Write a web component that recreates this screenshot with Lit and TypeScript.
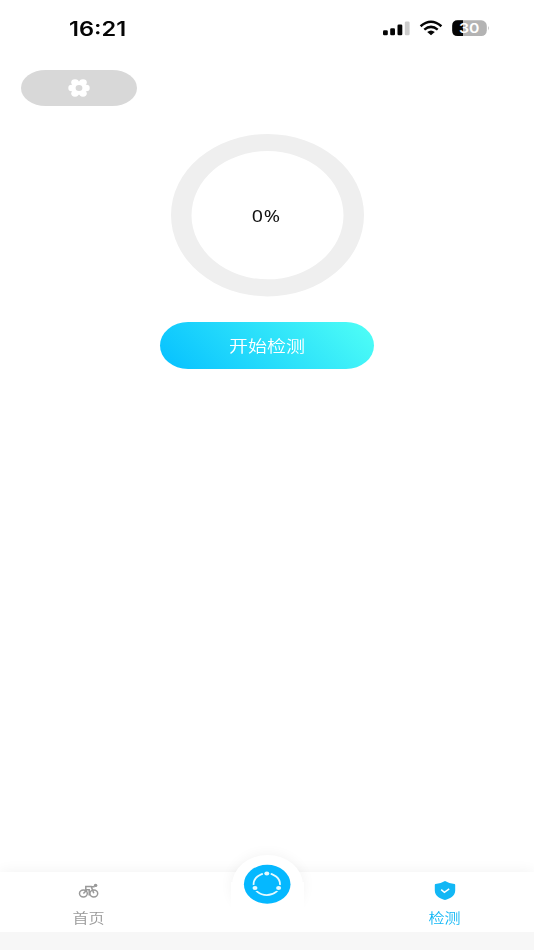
import { LitElement, html, css } from "lit";
import { customElement } from "lit/decorators.js";

@customElement("app-root")
export class AppRoot extends LitElement {
  static styles = css`
    :host {
      display: flex;
      flex-direction: column;
      width: 534px;
      height: 950px;
      overflow: hidden;
      background: #fff;
      font-family: "Noto Sans", "Noto Sans CJK SC", sans-serif;
    }
    svg { display: block; }
    .wide { display: inline-block; white-space: nowrap; transform: scaleX(1.19); will-change: transform; }
    .status {
      height: 56px;
      box-sizing: border-box;
      padding: 0 44px 0 69px;
      display: flex;
      align-items: center;
      justify-content: space-between;
    }
    .time {
      font: 600 19.5px/24px Inter, sans-serif;
      transform-origin: left;
      color: #050505;
      margin-top: 2px;
      transform: scaleX(1.21);
      will-change: transform;
    }
    .battery { font: 600 13.5px Inter, sans-serif; }
    main { flex: 1; display: flex; flex-direction: column; align-items: center; }
    .settings {
      align-self: flex-start;
      margin: 14px 0 0 21px;
      width: 116px;
      height: 36.4px;
      border-radius: 25px / 18.2px;
      background: #d8d8d8;
      display: flex;
      align-items: center;
      justify-content: center;
    }
    .ring {
      margin-top: 27.6px;
      width: 193px;
      height: 162.4px;
      display: grid;
      place-items: center;
      font: 16.5px/20px "Noto Sans", sans-serif;
      color: #111;
    }
    .ring > * { grid-area: 1 / 1; }
    .ring .wide { letter-spacing: 0.7px; margin: 1px 0 0 -1px; }
    .start {
      margin-top: 26px;
      width: 213.5px;
      height: 47px;
      border: 0;
      padding: 0 0 2px;
      border-radius: 28px / 23.5px;
      background: linear-gradient(45deg, #05c0ff, #50fff6);
      color: #fff;
      font: 350 16px/24px "Noto Sans CJK SC", sans-serif;
    }
    .tabs {
      height: 59.5px;
      display: grid;
      grid-template-columns: repeat(3, 1fr);
      background: #fff;
      box-shadow: 0 0 14px rgba(0, 0, 0, 0.06);
      position: relative;
    }
    .tab {
      display: flex;
      flex-direction: column;
      align-items: center;
      padding-top: 8px;
      color: #999;
      font: 350 13.5px/20px "Noto Sans CJK SC", sans-serif;
    }
    .tab .wide { margin: 7px 1px 0 0; }
    .active { color: #12b7f5; }
    .center { display: flex; justify-content: center; }
    .bump {
      margin-top: -17px;
      width: 71px;
      height: 60px;
      border-radius: 50%;
      background: #fff;
      box-shadow: 0 0 14px rgba(0, 0, 0, 0.06);
    }
    .cover {
      position: absolute;
      left: 231px;
      top: 10px;
      width: 73px;
      height: 49px;
      background: #fff;
    }
    .foot { height: 18.5px; background: #f7f7f7; position: relative; }
  `;

  render() {
    return html`
      <header class="status">
        <span class="time">16:21</span>
        <svg width="108" height="20" viewBox="382 18 108 20">
          <rect x="383" y="30.3" width="4.8" height="5" rx="1.3" fill="#050505" />
          <rect x="390.2" y="28.2" width="4.8" height="7.1" rx="1.3" fill="#050505" />
          <rect x="397.5" y="24.5" width="4.8" height="10.8" rx="1.3" fill="#050505" />
          <rect x="404.8" y="21.5" width="4.8" height="13.8" rx="1.3" fill="#ccc" />
          <g fill="none" stroke="#050505" stroke-width="2.5">
            <path d="M420.6 26.2Q431 17.4 441.4 26.2" />
            <path d="M424.3 29.6Q431 24.2 437.7 29.6" />
          </g>
          <path d="M427.2 32Q431 29 434.8 32L431 35.3Z" fill="#050505" />
          <rect x="452.2" y="20.3" width="34.6" height="15.8" rx="5.5" fill="#b3b3b3" />
          <path d="M463 20.3H457.7Q452.2 20.3 452.2 25.8V30.6Q452.2 36.1 457.7 36.1H463Z" fill="#050505" />
          <path d="M488 25.8Q489.8 28.2 488 30.6Z" fill="#b3b3b3" />
          <text class="battery" x="459" y="33.2" textLength="20.5" lengthAdjust="spacingAndGlyphs" fill="#fff">30</text>
        </svg>
      </header>
      <main>
        <div class="settings">
          <svg width="22" height="18" viewBox="-11 -9 22 18">
            <g fill="#fff">
              <ellipse rx="8" ry="6.8" />
              <circle cx="-7.5" r="3.2" /><circle cx="7.5" r="3.2" />
              <ellipse cx="-4" cy="-5.6" rx="3.8" ry="3.1" /><ellipse cx="4" cy="-5.6" rx="3.8" ry="3.1" />
              <ellipse cx="-4" cy="5.6" rx="3.8" ry="3.1" /><ellipse cx="4" cy="5.6" rx="3.8" ry="3.1" />
            </g>
            <ellipse rx="3.4" ry="2.9" fill="#d8d8d8" />
          </svg>
        </div>
        <div class="ring">
          <svg width="193" height="162.4" viewBox="0 0 193 162.4" overflow="visible">
            <path fill="#efefef" fill-rule="evenodd" d="M0 81.2A96.5 81.2 0 0 1 193 81.2A96.5 81.2 0 0 1 0 81.2ZM20.5 81.2A76 64.2 0 0 0 172.5 81.2A76 64.2 0 0 0 20.5 81.2Z" />
          </svg>
          <span class="wide">0%</span>
        </div>
        <button class="start"><span class="wide">开始检测</span></button>
      </main>
      <nav class="tabs">
        <div class="tab">
          <svg width="22" height="20" viewBox="78 880 22 20">
            <g fill="none" stroke="#999" stroke-width="1.5">
              <ellipse cx="83.4" cy="893.5" rx="3.9" ry="3.4" />
              <ellipse cx="93.8" cy="893.5" rx="3.9" ry="3.4" />
              <path d="M83.4 893.5L86.5 890.4M85.8 890V886.4H91.2L93.8 893.3M86.2 889.8H89.2V895.4M91.2 886.4L94.6 886.8" />
            </g>
            <ellipse cx="95.6" cy="885.4" rx="1.8" ry="1.6" fill="#999" />
          </svg>
          <span class="wide">首页</span>
        </div>
        <div class="center"><div class="bump"></div></div>
        <div class="tab active">
          <svg width="22" height="20" viewBox="0 0 22 20">
            <path d="M11 1Q15 3.3 20.5 4Q21.2 4.2 21.2 5V10.5C21.2 16 15.5 19 11 20C6.5 19 .8 16 .8 10.5V5Q.8 4.2 1.5 4Q7 3.3 11 1Z" fill="#12b7f5" />
            <path d="M7.2 9.6L10.4 12.3L15.2 8.8" fill="none" stroke="#fff" stroke-width="1.5" />
          </svg>
          <span class="wide">检测</span>
        </div>
        <div class="cover">
          <svg width="73" height="49" viewBox="231 882 73 49" overflow="visible">
            <ellipse cx="267.2" cy="884.2" rx="23.3" ry="19.5" fill="#05b8ff" />
            <ellipse cx="266.8" cy="884.2" rx="13.2" ry="10.9" fill="none" stroke="#e5faff" stroke-width="1.8" />
            <g fill="#05b8ff">
              <ellipse cx="266.8" cy="873.6" rx="4" ry="3.3" />
              <ellipse cx="255" cy="888" rx="4" ry="3.3" />
              <ellipse cx="278.6" cy="888" rx="4" ry="3.3" />
            </g>
            <g fill="#e5faff">
              <ellipse cx="266.8" cy="873.5" rx="2.5" ry="2.1" />
              <ellipse cx="255" cy="888" rx="2.5" ry="2.1" />
              <ellipse cx="278.6" cy="888" rx="2.5" ry="2.1" />
            </g>
          </svg>
        </div>
      </nav>
      <div class="foot"></div>
    `;
  }
}
